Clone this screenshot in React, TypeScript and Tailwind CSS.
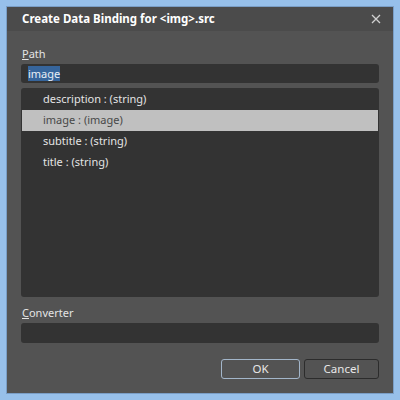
import React from "react";

const items = [
  { id: 1, label: "description : (string)" },
  { id: 2, label: "image : (image)", selected: true },
  { id: 3, label: "subtitle : (string)" },
  { id: 4, label: "title : (string)" },
];

const App = () => {
  return (
    <div
      className="w-[400px] h-[400px] bg-[#97c0ea] p-[6px]"
      style={{ fontFamily: '"Noto Sans", "Open Sans", sans-serif' }}
    >
      <div className="w-full h-full border border-[#7a9ec6] bg-[#535353] flex flex-col text-[11px] text-[#e4e4e4]">
        {/* title bar */}
        <div className="h-[24px] shrink-0 bg-[#4b4b4b] flex flex-row items-center justify-between pl-[15px] pr-[12px]">
          <span className="font-bold text-[11.5px] text-white">
            Create Data Binding for &lt;img&gt;.src
          </span>
          <svg width="10" height="10" viewBox="0 0 10 10">
            <path d="M1 1 L9 9 M9 1 L1 9" stroke="#d0d0d0" strokeWidth="1.3" />
          </svg>
        </div>

        <div className="flex flex-col px-[14px] pt-[15px]">
          <div className="h-[16px] leading-[16px] pl-px">
            <u>P</u>ath
          </div>
          <div className="mt-[2px] h-[19px] bg-[#333333] rounded-[3px] flex items-center px-[7px]">
            <span className="bg-[#36659c] text-[#e8eef6] leading-[15px] h-[15px]">image</span>
          </div>

          <div className="mt-[5px] h-[209px] bg-[#333333] rounded-[3px] p-px">
            <ul>
              {items.map((item) => (
                <li
                  key={item.id}
                  className={
                    item.selected
                      ? "h-[21px] flex items-center pl-[21px] bg-[#c0c0c0] text-[#484848]"
                      : "h-[21px] flex items-center pl-[21px]"
                  }
                >
                  {item.label}
                </li>
              ))}
            </ul>
          </div>

          <div className="mt-[8px] h-[16px] leading-[16px] pl-px">
            <u>C</u>onverter
          </div>
          <div className="mt-[2px] h-[20px] bg-[#333333] rounded-[3px]"></div>

          <div className="mt-[16px] flex flex-row justify-end gap-[4px]">
            <button className="w-[79px] h-[20px] rounded-[3px] border border-[#a3b6ca] bg-[#535353] text-[#e8e8e8] text-[11.5px] leading-none">
              OK
            </button>
            <button className="w-[75px] h-[20px] rounded-[3px] border border-[#2c2c2c] bg-[#535353] text-[#e8e8e8] text-[11.5px] leading-none">
              Cancel
            </button>
          </div>
        </div>
      </div>
    </div>
  );
};

export default App;
